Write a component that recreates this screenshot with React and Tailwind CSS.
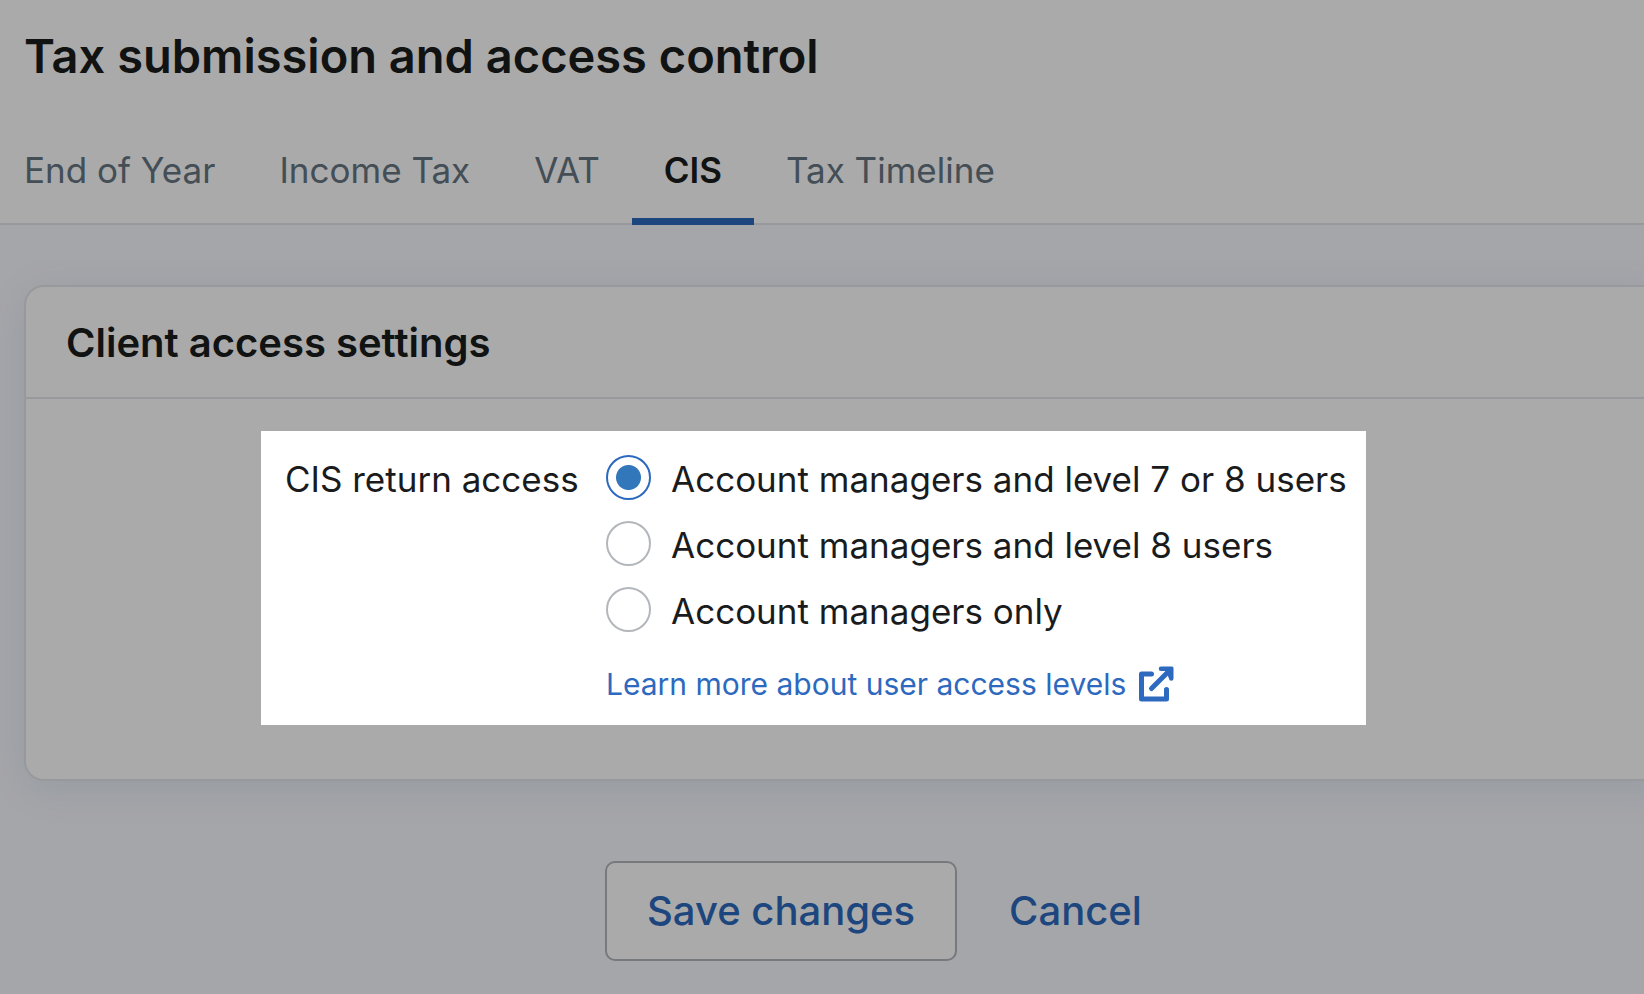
import { useState } from "react";

const tabs = ["End of Year", "Income Tax", "VAT", "CIS", "Tax Timeline"];

const accessOptions = [
  { value: "level-7", label: "Account managers and level 7 or 8 users" },
  { value: "level-8", label: "Account managers and level 8 users" },
  { value: "managers", label: "Account managers only" },
];

function ExternalLinkIcon() {
  return (
    <svg
      viewBox="0 0 36 36"
      className="h-9 w-9 shrink-0"
      fill="none"
      stroke="currentColor"
      strokeWidth="5"
      strokeLinecap="round"
      strokeLinejoin="round"
      aria-hidden="true"
    >
      <path d="M13.5 8H3.500v25h25V23.500" />
      <path d="M13.500 22.500L31 5" />
      <path
        d="M23 .500H34a1.500 1.500 0 0 1 1.500 1.500V12.500a2.200 2.200 0 0 1-4.500 0L29 8L27.500 5H23a2.200 2.200 0 0 1 0-4.500z"
        fill="currentColor"
        stroke="none"
      />
    </svg>
  );
}

function Tabs({ active, onSelect }) {
  return (
    <nav className="flex">
      {tabs.map((tab) => (
        <a
          key={tab}
          href="#"
          onClick={() => onSelect(tab)}
          className={`px-8 pt-6 pb-6 text-[35px] leading-[48px] whitespace-nowrap ${
            tab === active
              ? "-mb-[2px] border-b-[7px] border-[#2d69be] font-semibold text-[#1a1b1c]"
              : "text-[#657581]"
          }`}
        >
          {tab}
        </a>
      ))}
    </nav>
  );
}

function RadioOption({ option, checked, onChange }) {
  return (
    <label className="flex items-start gap-5 text-[35px] leading-[48px] whitespace-nowrap">
      <input
        type="radio"
        name="cis-access"
        value={option.value}
        checked={checked}
        onChange={onChange}
        className="h-[45px] w-[45px] shrink-0 appearance-none rounded-full border-2 border-[#b3b7bc] bg-white checked:border-[#2d69be] checked:bg-[radial-gradient(circle,#3377bb_12px,white_13px)]"
      />
      {option.label}
    </label>
  );
}

export default function App() {
  const [activeTab, setActiveTab] = useState("CIS");
  const [access, setAccess] = useState("level-7");

  return (
    <div className="min-h-screen overflow-hidden bg-[#f8f9ff] font-[Inter,sans-serif] text-[#1a1b1c]">
      {/* HEADER */}
      <header className="border-b-2 border-[#e4e6ea] bg-white pt-6">
        <h1 className="px-6 text-[47px] leading-[64px] font-semibold">
          Tax submission and access control
        </h1>
        <div className="-ml-2 pt-[34px]">
          <Tabs active={activeTab} onSelect={setActiveTab} />
        </div>
      </header>

      {/* SETTINGS */}
      <main className="pt-[60px] pl-6">
        <section className="-mr-8 rounded-[20px] border-2 border-[#e4e6ea] bg-white pb-[54px] shadow-[0_8px_40px_rgba(20,90,120,0.1)]">
          <h2 className="border-b-2 border-[#e4e6ea] px-10 pt-7 pb-[26px] text-[40px] leading-[56px] font-semibold">
            Client access settings
          </h2>

          {/* the spread shadow dims everything outside the spotlight */}
          <div className="relative z-10 mt-8 ml-[235px] flex w-[1105px] gap-8 bg-white pt-6 pb-5 pl-6 shadow-[0_0_0_200vmax_rgba(0,0,0,0.333)]">
            <p
              id="access-label"
              className="w-[289px] shrink-0 text-right text-[35px] leading-[48px] whitespace-nowrap"
            >
              CIS return access
            </p>
            <div>
              <div
                role="radiogroup"
                aria-labelledby="access-label"
                className="flex flex-col gap-[18px]"
              >
                {accessOptions.map((option) => (
                  <RadioOption
                    key={option.value}
                    option={option}
                    checked={access === option.value}
                    onChange={() => setAccess(option.value)}
                  />
                ))}
              </div>
              <a
                href="#"
                className="mt-[29px] mb-px flex items-center gap-3 text-[30px] leading-[40px] whitespace-nowrap text-[#2d69be]"
              >
                Learn more about user access levels
                <ExternalLinkIcon />
              </a>
            </div>
          </div>
        </section>

        <div className="mt-20 flex items-center gap-[52px] pl-[581px] text-[40px] font-medium text-[#2d69be]">
          <button
            type="button"
            className="h-[100px] rounded-[10px] border-2 border-[#b2b7ba] bg-white px-10"
          >
            Save changes
          </button>
          <a href="#">Cancel</a>
        </div>
      </main>
    </div>
  );
}
